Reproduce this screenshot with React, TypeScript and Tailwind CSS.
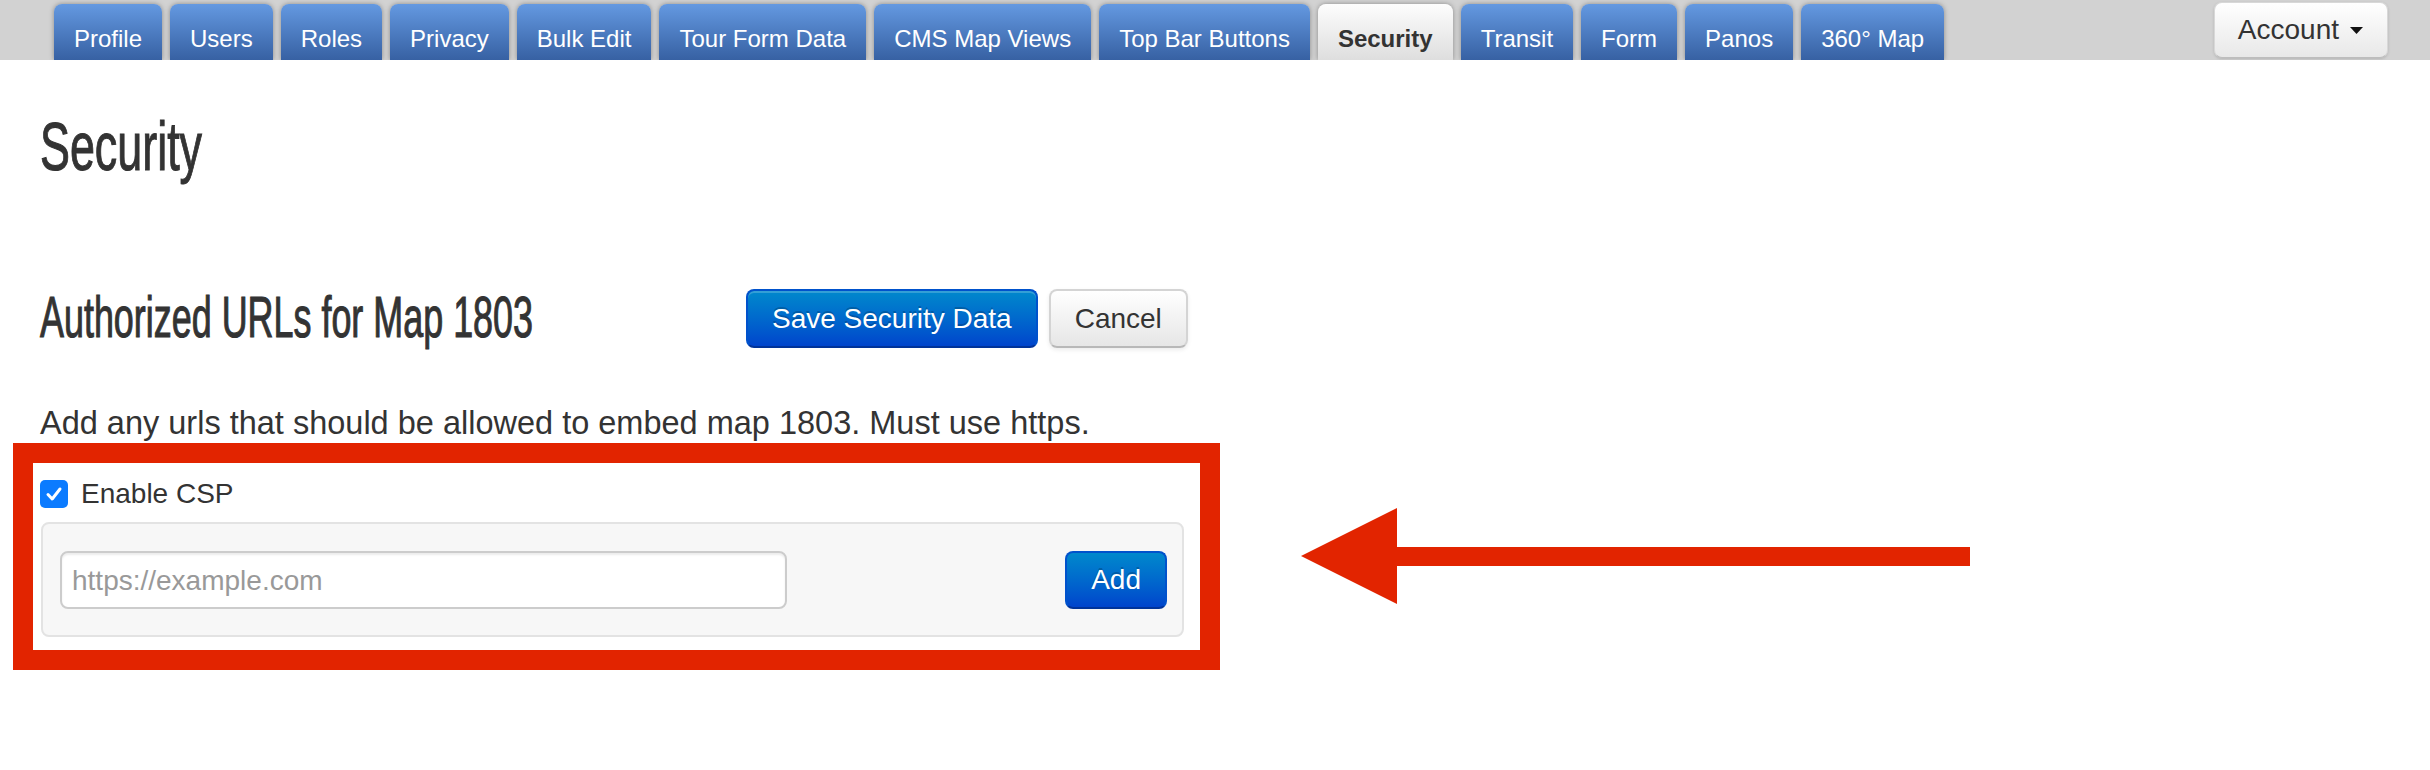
import React from "react";

const tabs = [
  "Profile",
  "Users",
  "Roles",
  "Privacy",
  "Bulk Edit",
  "Tour Form Data",
  "CMS Map Views",
  "Top Bar Buttons",
  "Security",
  "Transit",
  "Form",
  "Panos",
  "360° Map",
];

function Tab({ label, active }: { label: string; active: boolean }) {
  return (
    <div
      className={
        active
          ? "h-[56px] rounded-t-[8px] px-5 pt-[21px] text-[24px] leading-[28px] whitespace-nowrap shadow-[0_0_5px_rgba(0,0,0,0.35)] bg-linear-to-b from-[#fdfdfd] to-[#dedede] text-[#333] font-bold"
          : "h-[56px] rounded-t-[8px] px-5 pt-[21px] text-[24px] leading-[28px] whitespace-nowrap shadow-[0_0_5px_rgba(0,0,0,0.35)] bg-linear-to-b from-[#6499e1] to-[#3761a3] text-white"
      }
    >
      {label}
    </div>
  );
}

export default function App() {
  return (
    <div className="relative w-[2430px] h-[770px] overflow-hidden bg-white font-['Liberation_Sans',Arial,sans-serif] text-[#333]">
      <header className="h-[60px] bg-[#d2d2d2] flex justify-between pl-[54px] pr-[42px] overflow-hidden">
        <nav className="flex items-end gap-[8px] h-[60px]">
          {tabs.map((t) => (
            <Tab key={t} label={t} active={t === "Security"} />
          ))}
        </nav>
        <button className="mt-[2px] h-[56px] flex items-center pl-[23px] pr-[24px] rounded-[8px] border border-[#d8d8d8] border-b-[#bdbdbd] bg-linear-to-b from-[#ffffff] to-[#e8e8e8] shadow-[0_1px_3px_rgba(0,0,0,0.15)] text-[28px] leading-[40px] text-[#333]">
          <span>Account</span>
          <svg className="ml-[11px]" width="13" height="7" viewBox="0 0 13 7">
            <polygon points="0,0 13,0 6.5,7" fill="#111" />
          </svg>
        </button>
      </header>

      <main className="pl-10 pt-[47px]">
        <div className="h-[80px]">
          <h1 className="origin-left scale-x-[0.65] text-[69px] leading-[80px] font-normal whitespace-nowrap [-webkit-text-stroke:1.1px_#333]">
            Security
          </h1>
        </div>

        <div className="mt-[102px] h-[59px] flex items-center">
          <div className="w-[706px] mb-[3px]">
            <h2 className="origin-left scale-x-[0.63] text-[57px] leading-[56px] font-normal whitespace-nowrap [-webkit-text-stroke:1.1px_#333]">
              Authorized URLs for Map 1803
            </h2>
          </div>
          <button className="h-[59px] px-[24px] rounded-[8px] border-2 border-[#0052cc] border-b-[#003399] bg-linear-to-b from-[#0088cc] to-[#0044cc] text-white text-[28px] leading-[40px] [text-shadow:0_-2px_0_rgba(0,0,0,0.2)] shadow-[inset_0_2px_0_rgba(255,255,255,0.2)]">
            Save Security Data
          </button>
          <button className="ml-[11px] h-[59px] px-[24px] rounded-[8px] border-2 border-[#d4d4d4] border-b-[#b8b8b8] bg-linear-to-b from-[#ffffff] to-[#e6e6e6] text-[#333] text-[28px] leading-[40px] shadow-[0_2px_4px_rgba(0,0,0,0.08)]">
            Cancel
          </button>
        </div>

        <p className="mt-[55px] text-[32.5px] leading-[40px]">
          Add any urls that should be allowed to embed map 1803. Must use https.
        </p>

        <div className="-ml-[27px] w-[1207px] border-[20px] border-[#e22400] pl-[8px] pr-[16px] pt-[11px] pb-[13px]">
          <label className="flex items-center h-[40px] -ml-[1px]">
            <span className="w-[28px] h-[28px] rounded-[5px] bg-[#0b7bff] flex items-center justify-center">
              <svg width="20" height="20" viewBox="0 0 20 20">
                <path
                  d="M4 10.5 L8.2 15 L16 5"
                  fill="none"
                  stroke="white"
                  strokeWidth="3"
                  strokeLinecap="round"
                  strokeLinejoin="round"
                />
              </svg>
            </span>
            <span className="ml-[13px] text-[28px] leading-[40px]">Enable CSP</span>
          </label>

          <div className="mt-[8px] h-[115px] rounded-[8px] border-2 border-[#e3e3e3] bg-[#f7f7f7] flex items-center justify-between pl-[17px] pr-[15px]">
            <input
              type="text"
              placeholder="https://example.com"
              className="w-[727px] h-[58px] rounded-[8px] border-2 border-[#cccccc] bg-white pl-[10px] pt-[2px] text-[28px] text-[#555] placeholder:text-[#999] shadow-[inset_0_2px_2px_rgba(0,0,0,0.075)] outline-none"
            />
            <button className="h-[58px] px-[24px] rounded-[8px] border-2 border-[#0052cc] border-b-[#003399] bg-linear-to-b from-[#0088cc] to-[#0044cc] text-white text-[28px] leading-[40px] [text-shadow:0_-2px_0_rgba(0,0,0,0.2)]">
              Add
            </button>
          </div>
        </div>
      </main>

      <svg
        className="absolute left-[1301px] top-[508px]"
        width="669"
        height="96"
        viewBox="0 0 669 96"
      >
        <polygon points="0,48 96,0 96,96" fill="#e22400" />
        <rect x="95" y="39" width="574" height="19" fill="#e22400" />
      </svg>
    </div>
  );
}
